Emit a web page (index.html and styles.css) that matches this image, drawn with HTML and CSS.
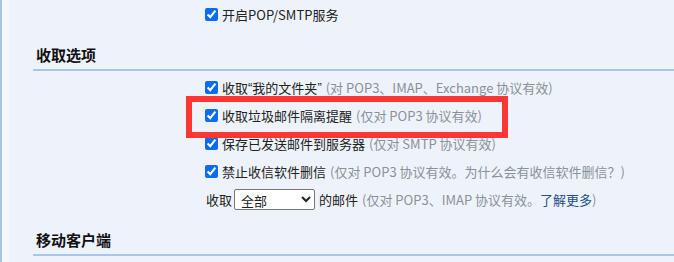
FILE: index.html
```html
<!DOCTYPE html>
<html lang="zh-CN">
<head>
    <meta charset="UTF-8">
    <title>POP3/SMTP 设置</title>
    <link rel="stylesheet" href="styles.css">
</head>
<body>
<div class="page">
    <div class="inner">
        <div class="opts">
            <div class="row">
                <label><input type="checkbox" checked>开启POP/SMTP服务</label>
            </div>
        </div>
        <h3 class="sec-title">收取选项</h3>
        <div class="opts list">
            <div class="row">
                <label><input type="checkbox" checked>收取<span class="q">“</span>我的文件夹<span class="q">”</span></label>
                <span class="tip">(对 POP3、IMAP、Exchange 协议有效)</span>
            </div>
            <div class="row">
                <label><input type="checkbox" checked>收取垃圾邮件隔离提醒</label>
                <span class="tip">(仅对 POP3 协议有效)</span>
            </div>
            <div class="row">
                <label><input type="checkbox" checked>保存已发送邮件到服务器</label>
                <span class="tip">(仅对 SMTP 协议有效)</span>
            </div>
            <div class="row">
                <label><input type="checkbox" checked>禁止收信软件删信</label>
                <span class="tip">(仅对 POP3 协议有效。<a href="#">为什么会有收信软件删信？</a>)</span>
            </div>
            <div class="row sel-row">
                <span>收取</span>
                <select class="range">
                    <option>全部</option>
                    <option>最近30天</option>
                </select>
                <span>的邮件</span>
                <span class="tip">(仅对 POP3、IMAP 协议有效。<a href="#" class="more">了解更多</a>)</span>
            </div>
        </div>
        <h3 class="sec-title">移动客户端</h3>
    </div>
    <!-- 标注框 -->
    <div class="mark"></div>
</div>
</body>
</html>
```

FILE: styles.css
```css
*{
    margin:0;
    padding:0;
}
body{
    background:#eef3fb;
    font-family:"Noto Sans CJK SC",sans-serif;
    font-size:13px;
    color:#222;
}
.page{
    position:relative;
    height:262px;
    border-left:2px solid #a6c2e6;
    overflow:hidden;
}
.inner{
    border-left:7px solid #f4f7fc;
    padding-left:24px;
    height:100%;
}
.opts{
    padding-left:168px;
}
.list{
    margin-top:2px;
}
.row{
    height:28px;
    display:flex;
    align-items:center;
    white-space:nowrap;
}
.row label{
    display:flex;
    align-items:center;
}
.row input{
    width:13px;
    height:13px;
    margin:3px 4px 3px 4px;
    accent-color:#0b6cf0;
}
.q{
    font-family:"Liberation Sans",sans-serif;
}
.tip{
    color:#8a9099;
    margin-left:4px;
}
.tip a{
    color:#8a9099;
    text-decoration:none;
}
.tip a.more{
    color:#1f4f8f;
}
.sel-row{
    padding-left:5px;
}
.range{
    width:81px;
    height:21px;
    margin:0 4px 0 2px;
    font-family:"Noto Sans CJK SC",sans-serif;
    font-size:13px;
    color:#222;
    background:#fff;
    border:1px solid #767676;
    border-radius:2px;
    padding-left:2px;
}
.sec-title{
    margin-top:16px;
    padding:0 0 3px 3px;
    line-height:22px;
    font-size:15px;
    font-weight:bold;
    color:#111;
    border-bottom:2px solid #a8c6ea;
}
.mark{
    position:absolute;
    left:184px;
    top:96px;
    width:310px;
    height:30px;
    border:6px solid #fd3535;
}
```
